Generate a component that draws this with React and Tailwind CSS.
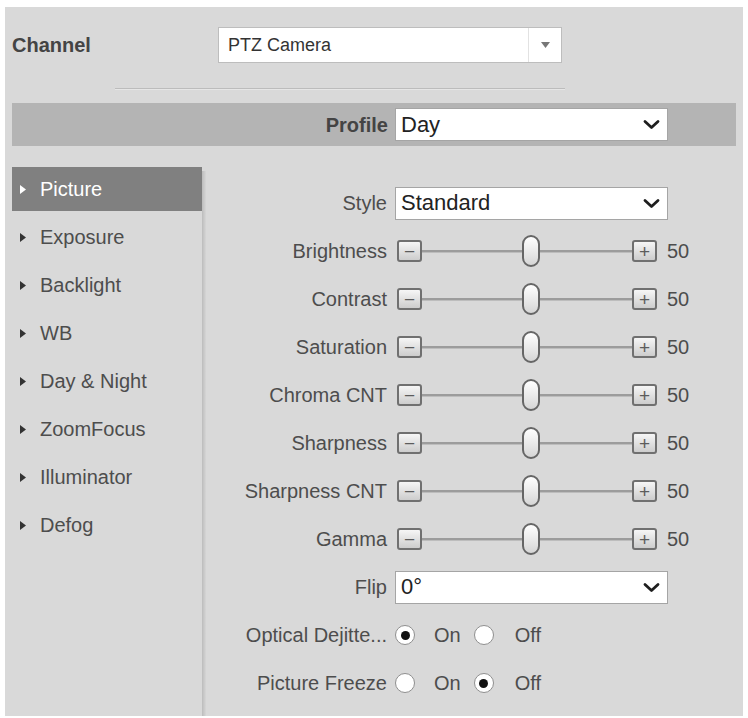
import React from 'react';

const FONT = { fontFamily: '"Liberation Sans", Arial, sans-serif' };

const menu = ['Picture', 'Exposure', 'Backlight', 'WB', 'Day & Night', 'ZoomFocus', 'Illuminator', 'Defog'];

const sliders = ['Brightness', 'Contrast', 'Saturation', 'Chroma CNT', 'Sharpness', 'Sharpness CNT', 'Gamma'];

function Chevron() {
  return (
    <svg width="17" height="11" viewBox="0 0 17 11">
      <path d="M2 2.5l6.5 6 6.5-6" stroke="#1e1e1e" strokeWidth="2.8" fill="none" strokeLinecap="round" strokeLinejoin="round" />
    </svg>
  );
}

function Select({ value }) {
  return (
    <div className="w-[273px] h-[33px] bg-white border border-[#a5a5a5] flex items-center justify-between pl-[5px] pr-[7px] text-[22px] text-[#222] leading-none">
      <span>{value}</span>
      <Chevron />
    </div>
  );
}

function Row({ label, children }) {
  return (
    <div className="h-[48px] flex items-center">
      <div className="w-[181px] text-right text-[20px] text-[#4d4d4d] whitespace-nowrap">{label}</div>
      <div className="ml-[8px] flex items-center">{children}</div>
    </div>
  );
}

function StepButton({ sign }) {
  return (
    <div className="w-[25px] h-[22px] rounded-[3px] border-2 border-[#707070] bg-gradient-to-b from-[#f6f6f6] to-[#cdcdcd] flex items-center justify-center text-[19px] leading-none text-[#5c5c5c]">
      {sign}
    </div>
  );
}

function Slider({ value }) {
  return (
    <div className="flex items-center ml-[2px]">
      <StepButton sign="−" />
      <div className="relative w-[210px] h-[34px] flex items-center">
        <div className="w-full h-[3px] bg-[#9c9c9c] border-b border-[#bdbdbd]" />
        <div className="absolute left-[100px] top-[1px] w-[18px] h-[32px] rounded-full border-2 border-[#666] bg-gradient-to-b from-white to-[#d6d6d6]" />
      </div>
      <StepButton sign="+" />
      <span className="ml-[10px] text-[20px] text-[#4d4d4d]">{value}</span>
    </div>
  );
}

function Radio({ checked }) {
  return (
    <div className="w-[20px] h-[20px] rounded-full bg-white border border-[#8f8f8f] flex items-center justify-center">
      {checked && <div className="w-[9px] h-[9px] rounded-full bg-[#111]" />}
    </div>
  );
}

function RadioPair({ on }) {
  return (
    <div className="flex items-center text-[20px] text-[#4d4d4d]">
      <Radio checked={on} />
      <span className="ml-[19px]">On</span>
      <span className="ml-[13px]"><Radio checked={!on} /></span>
      <span className="ml-[21px]">Off</span>
    </div>
  );
}

export default function App() {
  return (
    <div className="w-[748px] h-[718px] bg-white pt-[7px] pl-[5px] overflow-hidden" style={FONT}>
      <div className="w-[738px] h-[709px] bg-[#d9d9d9] px-[7px] flex flex-col">
        {/* channel picker */}
        <div className="h-[76px] flex items-center">
          <div className="w-[206px] text-[20px] font-bold text-[#444]">Channel</div>
          <div className="w-[344px] h-[36px] bg-white border border-[#bdbdbd] flex items-stretch">
            <span className="flex-1 flex items-center pl-[9px] text-[18px] text-[#333]">PTZ Camera</span>
            <span className="w-[33px] border-l border-[#e2e2e2] flex items-center justify-center">
              <svg width="9" height="6" viewBox="0 0 9 6"><path d="M0 0h9L4.5 6z" fill="#777" /></svg>
            </span>
          </div>
        </div>
        <div className="mt-[5px] ml-[103px] w-[450px] h-[2px] border-t border-[#bcbcbc] border-b border-b-[#e6e6e6]" />

        {/* profile bar */}
        <div className="mt-[13px] h-[43px] bg-[#b4b4b4] flex items-center">
          <div className="w-[376px] text-right text-[20px] font-bold text-[#444]">Profile</div>
          <div className="ml-[7px]"><Select value="Day" /></div>
        </div>

        <div className="flex flex-1 mt-[21px]">
          <div className="w-[190px] flex flex-col gap-[4px]">
            {menu.map((m, i) => (
              <div
                key={m}
                className={`h-[44px] flex items-center pl-[8px] text-[20px] ${i === 0 ? 'bg-[#808080] text-white' : 'text-[#4d4d4d]'}`}
              >
                <svg width="6" height="9" viewBox="0 0 6 9" className="mr-[14px]">
                  <path d="M0 0l6 4.5L0 9z" fill={i === 0 ? '#fff' : '#333'} />
                </svg>
                {m}
              </div>
            ))}
          </div>
          <div className="w-[4px] mt-[4px] bg-gradient-to-r from-[#bcbcbc] to-[#d6d6d6]" />

          <div className="flex-1 flex flex-col mt-[12px]">
            <Row label="Style"><Select value="Standard" /></Row>
            {sliders.map((s) => (
              <Row key={s} label={s}><Slider value={50} /></Row>
            ))}
            <Row label="Flip"><Select value="0°" /></Row>
            <Row label="Optical Dejitte..."><RadioPair on /></Row>
            <Row label="Picture Freeze"><RadioPair on={false} /></Row>
          </div>
        </div>
      </div>
    </div>
  );
}
